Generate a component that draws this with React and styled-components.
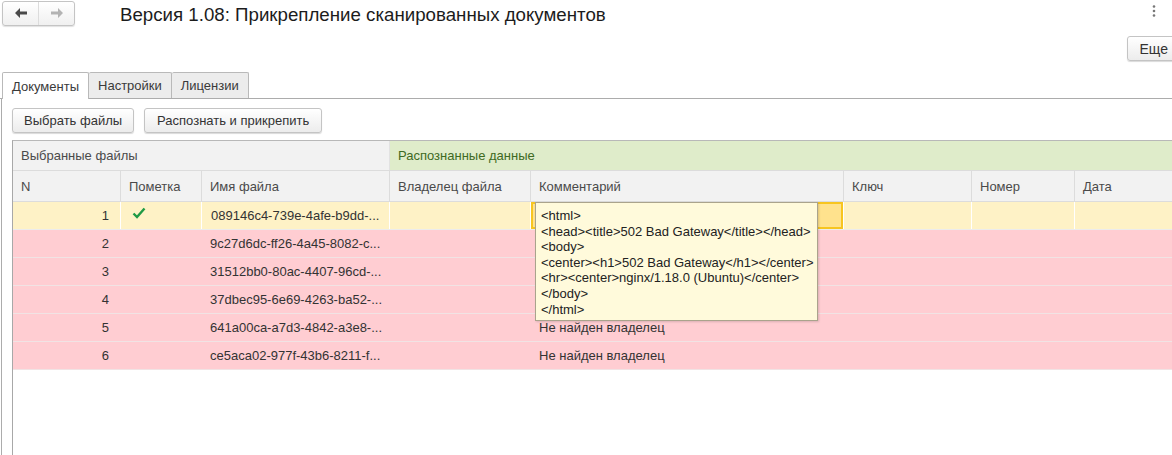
import React from 'react'
import styled, { createGlobalStyle } from 'styled-components'

const GlobalStyle = createGlobalStyle`
  html, body {
    margin: 0;
    padding: 0;
    background: #fff;
    overflow: hidden;
  }
  body {
    font-family: "Liberation Sans", Arial, sans-serif;
    font-size: 13px;
    color: #333;
  }
`

const Page = styled.div`
  width: 1172px;
  height: 455px;
  overflow: hidden;
  position: relative;
`
const TopBar = styled.div`
  height: 28px;
  display: flex;
  align-items: center;
  padding: 0 0 0 2px;
`
const NavGroup = styled.div`
  display: flex;
  height: 23px;
  border: 1px solid #c4c4c4;
  border-radius: 3px;
  background: linear-gradient(#ffffff, #f0f0f0);
  box-shadow: 0 1px 1px rgba(0, 0, 0, 0.12);
  margin-top: -2px;
`
const NavButton = styled.div`
  width: 35px;
  display: flex;
  align-items: center;
  justify-content: center;
  border-left: ${({ first }) => (first ? 'none' : '1px solid #dcdcdc')};
`
const Title = styled.h1`
  margin: 0 0 0 45px;
  font-size: 18.7px;
  font-weight: normal;
  color: #1c1c1c;
  flex: 1;
  margin-top: 1px;
`
const Dots = styled.div`
  width: 40px;
  display: flex;
  justify-content: center;
  margin-top: -6px;
  margin-right: -2px;
`
const CommandRow = styled.div`
  display: flex;
  justify-content: flex-end;
  padding-top: 8px;
  height: 35px;
`
const Button = styled.button`
  font-family: "Liberation Sans", Arial, sans-serif;
  font-size: 13px;
  color: #333;
  height: 25px;
  padding: 0 ${({ pad }) => pad || 13}px;
  border: 1px solid #c4c4c4;
  border-radius: 3px;
  background: linear-gradient(#ffffff, #ececec);
  box-shadow: 0 1px 1px rgba(0, 0, 0, 0.15);
  cursor: pointer;
  white-space: nowrap;
`
const MoreButton = styled(Button)`
  font-size: 14px;
  margin-right: -9px;
  padding: 0 12px 0 12px;
`
const TabStrip = styled.div`
  display: flex;
  align-items: flex-end;
  height: 27px;
  padding-left: 2px;
  border-bottom: 1px solid #acacac;
`
const Tab = styled.div`
  padding: 0 9px;
  display: flex;
  align-items: center;
  border: 1px solid #b9b9b9;
  border-left: ${({ first }) => (first ? '1px solid #b9b9b9' : 'none')};
  border-bottom: none;
  border-radius: 2px 2px 0 0;
  background: ${({ active }) => (active ? '#ffffff' : '#ececec')};
  margin-bottom: ${({ active }) => (active ? '-1px' : '0')};
  height: ${({ active }) => (active ? '26px' : '25px')};
  color: #3a3a3a;
  font-size: 13px;
`
const Panel = styled.div`
  margin-left: 1px;
  border-left: 1px solid #acacac;
  height: 360px;
  padding: 9px 0 0 10px;
`
const Actions = styled.div`
  display: flex;
  gap: 10px;
  margin-bottom: 7px;
`
const Table = styled.div`
  border-top: 1px solid #b8b8b8;
  border-left: 1px solid #a8a8a8;
  height: 320px;
  width: 1200px;
`
const cols = '107px 81px 188px 141px 313px 128px 103px 160px'
const Row = styled.div`
  display: grid;
  grid-template-columns: ${cols};
  height: ${({ h }) => h}px;
  background: ${({ bg }) => bg || 'transparent'};
  border-bottom: 1px solid ${({ line }) => line || '#dedede'};
`
const GroupCell = styled.div`
  grid-column: span ${({ span }) => span};
  display: flex;
  align-items: center;
  padding-left: 8px;
  background: ${({ green }) => (green ? '#dfecca' : '#f2f2f2')};
  color: ${({ green }) => (green ? '#3e6a23' : '#4a4a4a')};
  border-left: ${({ green }) => (green ? '1px solid #e2e2e2' : 'none')};
`
const HeadCell = styled.div`
  display: flex;
  align-items: center;
  padding-left: 8px;
  background: #f2f2f2;
  color: #4a4a4a;
  border-left: ${({ first }) => (first ? 'none' : '1px solid #dcdcdc')};
`
const Cell = styled.div`
  position: relative;
  display: flex;
  align-items: center;
  justify-content: ${({ right }) => (right ? 'flex-end' : 'flex-start')};
  padding: 0 ${({ right }) => (right ? '11px' : '0')} 0 ${({ right }) => (right ? '0' : '9px')};
  color: #333;
  white-space: nowrap;
  overflow: visible;
  border-left: ${({ divider, first }) => (first ? 'none' : divider ? `1px solid ${divider}` : 'none')};
  background: ${({ selected }) => (selected ? '#ffe28d' : 'transparent')};
  box-shadow: ${({ selected }) => (selected ? 'inset 0 0 0 2px #f7c520' : 'none')};
`
const Check = styled.div`
  padding-left: 2px;
  margin-top: -3px;
`
const Tooltip = styled.div`
  position: absolute;
  left: 4px;
  top: 0;
  width: 276px;
  height: 107px;
  padding: 5px 0 5px 5px;
  background: #fffadb;
  border: 1px solid #aaa38c;
  box-shadow: 1px 1px 2px rgba(0, 0, 0, 0.15);
  z-index: 5;
  font-size: 13px;
  line-height: 15.6px;
  color: #222;
  white-space: pre;
`

const rows = [
  { n: 1, mark: true, file: '089146c4-739e-4afe-b9dd-...', comment: '', tone: 'yellow' },
  { n: 2, file: '9c27d6dc-ff26-4a45-8082-c...', comment: '', tone: 'pink' },
  { n: 3, file: '31512bb0-80ac-4407-96cd-...', comment: '', tone: 'pink' },
  { n: 4, file: '37dbec95-6e69-4263-ba52-...', comment: '', tone: 'pink' },
  { n: 5, file: '641a00ca-a7d3-4842-a3e8-...', comment: 'Не найден владелец', tone: 'pink' },
  { n: 6, file: 'ce5aca02-977f-43b6-8211-f...', comment: 'Не найден владелец', tone: 'pink' },
]

const tones = {
  yellow: { bg: '#fef2c6', line: '#ececec', divider: '#ffffff' },
  pink: { bg: '#ffcdd2', line: '#f1e3e4', divider: null },
}

const errorText = `<html>
<head><title>502 Bad Gateway</title></head>
<body>
<center><h1>502 Bad Gateway</h1></center>
<hr><center>nginx/1.18.0 (Ubuntu)</center>
</body>
</html>`

const Arrow = ({ dir, color }) => (
  <svg width="14" height="12" viewBox="0 0 14 12">
    <g transform={dir === 'right' ? 'translate(14 0) scale(-1 1)' : undefined} fill={color}>
      <polygon points="1,6 6,1 6,4.5 13,4.5 13,7.5 6,7.5 6,11" />
    </g>
  </svg>
)

const App = () => {
  return (
    <Page>
      <GlobalStyle />
      <TopBar>
        <NavGroup>
          <NavButton first><Arrow dir="left" color="#4a4a4a" /></NavButton>
          <NavButton><Arrow dir="right" color="#b3b3b3" /></NavButton>
        </NavGroup>
        <Title>Версия 1.08: Прикрепление сканированных документов</Title>
        <Dots>
          <svg width="4" height="12" viewBox="0 0 4 12">
            <circle cx="2" cy="1.5" r="1.3" fill="#777" />
            <circle cx="2" cy="6" r="1.3" fill="#777" />
            <circle cx="2" cy="10.5" r="1.3" fill="#777" />
          </svg>
        </Dots>
      </TopBar>
      <CommandRow>
        <MoreButton>Еще</MoreButton>
      </CommandRow>
      <TabStrip>
        <Tab first active>Документы</Tab>
        <Tab>Настройки</Tab>
        <Tab>Лицензии</Tab>
      </TabStrip>
      <Panel>
        <Actions>
          <Button pad={11}>Выбрать файлы</Button>
          <Button pad={12}>Распознать и прикрепить</Button>
        </Actions>
        <Table>
          <Row h={29} line="#dcdcdc">
            <GroupCell span={3}>Выбранные файлы</GroupCell>
            <GroupCell span={5} green>Распознанные данные</GroupCell>
          </Row>
          <Row h={30} line="#dcdcdc">
            <HeadCell first>N</HeadCell>
            <HeadCell>Пометка</HeadCell>
            <HeadCell>Имя файла</HeadCell>
            <HeadCell>Владелец файла</HeadCell>
            <HeadCell>Комментарий</HeadCell>
            <HeadCell>Ключ</HeadCell>
            <HeadCell>Номер</HeadCell>
            <HeadCell>Дата</HeadCell>
          </Row>
          {rows.map((r) => {
            const t = tones[r.tone]
            return (
              <Row key={r.n} h={27} bg={t.bg} line={t.line}>
                <Cell right first>{r.n}</Cell>
                <Cell divider={t.divider}>
                  {r.mark && (
                    <Check>
                      <svg width="14" height="12" viewBox="0 0 14 12">
                        <path d="M1.5 6.5 L5 10 L12.5 1.5" fill="none" stroke="#1f9a45" strokeWidth="2.4" />
                      </svg>
                    </Check>
                  )}
                </Cell>
                <Cell divider={t.divider}>{r.file}</Cell>
                <Cell divider={t.divider} />
                <Cell divider={t.divider} selected={r.n === 1}>
                  {r.comment}
                  {r.n === 1 && <Tooltip>{errorText}</Tooltip>}
                </Cell>
                <Cell divider={t.divider} />
                <Cell divider={t.divider} />
                <Cell divider={t.divider} />
              </Row>
            )
          })}
        </Table>
      </Panel>
    </Page>
  )
}

export default App
